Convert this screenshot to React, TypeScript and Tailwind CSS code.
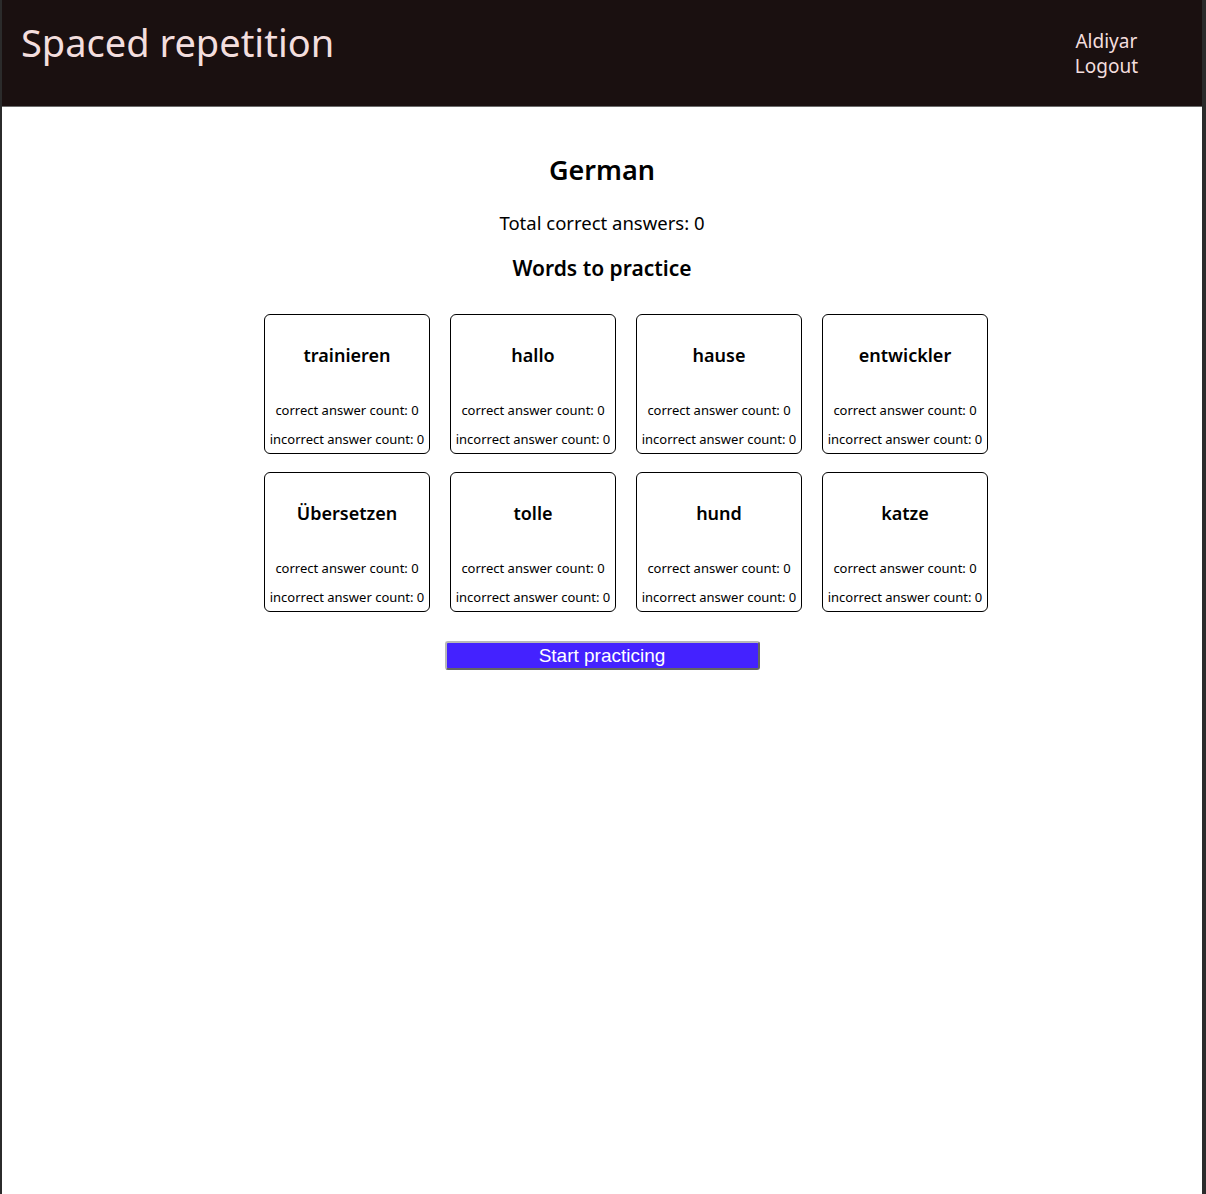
import React from "react";

const words = ["trainieren", "hallo", "hause", "entwickler", "Übersetzen", "tolle", "hund", "katze"];

export default function App() {
  return (
    <div
      className="flex flex-col h-[1194px] w-[1206px] border-l-2 border-r-4 border-[#2b2b2b] bg-white text-black"
      style={{ fontFamily: '"Noto Sans", "Open Sans", sans-serif' }}
    >
      <header className="flex justify-between items-start h-[107px] bg-[#1a1010] border-b border-[#6b6b6b] text-[#f3dede]">
        <h1 className="pl-[19px] pt-[16px] text-[38px] leading-[52px]">Spaced repetition</h1>
        <div className="flex flex-col items-center pr-[64px] pt-[29px] text-[19px] leading-[25px]">
          <span>Aldiyar</span>
          <span>Logout</span>
        </div>
      </header>
      <main className="flex flex-col items-center">
        <h2 className="mt-[45px] text-[27px] font-semibold leading-[36px]">German</h2>
        <p className="mt-[23px] text-[18.5px] leading-[24px]">Total correct answers: 0</p>
        <h3 className="mt-[19px] text-[21px] font-semibold leading-[28px]">Words to practice</h3>
        <div className="mt-[32px] ml-[48px] grid grid-cols-4 gap-x-[20px] gap-y-[18px]">
          {words.map((w) => (
            <div
              key={w}
              className="flex flex-col items-center w-[166px] h-[140px] border border-black rounded-[6px]"
            >
              <div className="mt-[27px] text-[18px] font-semibold leading-[26px]">{w}</div>
              <div className="mt-[33px] text-[13px] leading-[18px]">correct answer count: 0</div>
              <div className="mt-[11px] text-[13px] leading-[18px]">incorrect answer count: 0</div>
            </div>
          ))}
        </div>
        <button
          className="mt-[29px] w-[315px] h-[29px] bg-[#4422ff] text-white text-[19px] leading-[24px] rounded-[3px] border-2 border-[#b8b8b8] [border-style:outset]"
          style={{ fontFamily: '"Liberation Sans", Arial, sans-serif' }}
        >
          Start practicing
        </button>
      </main>
    </div>
  );
}
